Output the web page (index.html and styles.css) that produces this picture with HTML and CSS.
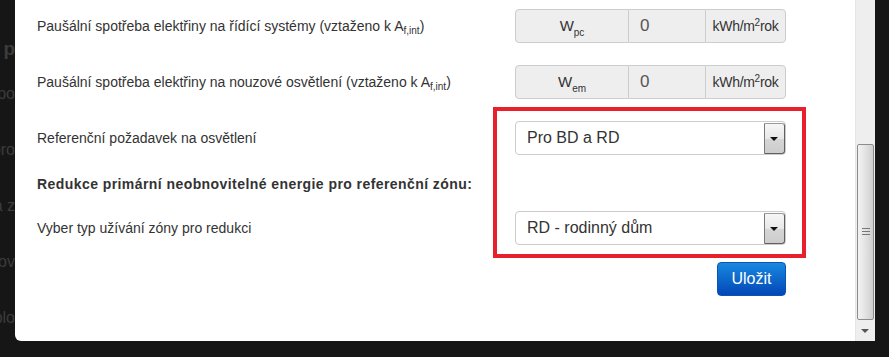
FILE: index.html
```html
<!DOCTYPE html>
<html lang="cs">
<head>
    <meta charset="UTF-8">
    <title>Osvětlení</title>
    <link rel="stylesheet" href="styles.css">
</head>
<body>
    <div class="screen">
        <div class="behind">
            <p class="bold">ný p</p>
            <p>é po</p>
            <p>a pro</p>
            <p>ha z</p>
            <p>nnov</p>
            <p>á plo</p>
        </div>

        <div class="modal">
            <div class="modal-body">
                <div class="row">
                    <div class="label">Paušální spotřeba elektřiny na řídící systémy (vztaženo k A<sub>f,int</sub>)</div>
                    <div class="input-group">
                        <div class="addon sym">W<sub>pc</sub></div>
                        <div class="value">0</div>
                        <div class="addon unit">kWh/m<sup>2</sup>rok</div>
                    </div>
                </div>

                <div class="row">
                    <div class="label">Paušální spotřeba elektřiny na nouzové osvětlení (vztaženo k A<sub>f,int</sub>)</div>
                    <div class="input-group">
                        <div class="addon sym">W<sub>em</sub></div>
                        <div class="value">0</div>
                        <div class="addon unit">kWh/m<sup>2</sup>rok</div>
                    </div>
                </div>

                <div class="row row-select">
                    <div class="label">Referenční požadavek na osvětlení</div>
                    <div class="select">
                        <span>Pro BD a RD</span>
                        <span class="drop"></span>
                    </div>
                </div>

                <div class="row heading">
                    <div class="label"><strong>Redukce primární neobnovitelné energie pro referenční zónu:</strong></div>
                </div>

                <div class="row">
                    <div class="label">Vyber typ užívání zóny pro redukci</div>
                    <div class="select">
                        <span>RD - rodinný dům</span>
                        <span class="drop"></span>
                    </div>
                </div>

                <div class="actions">
                    <button class="btn-save">Uložit</button>
                </div>

                <div class="highlight"></div>
            </div>
        </div>

        <div class="scrollbar">
            <div class="thumb"><span class="grip"></span></div>
            <div class="arrow-down"></div>
        </div>
    </div>
</body>
</html>
```

FILE: styles.css
```css
body {
    margin: 0;
    background-color: #161616;
    font-family: "Liberation Sans", Arial, sans-serif;
    overflow: hidden;
}
.screen {
    display: flex;
    width: 889px;
    height: 357px;
}
.behind {
    width: 15px;
    flex: none;
    overflow: hidden;
    color: #3c3c3c;
    font-size: 16px;
    padding-top: 38px;
}
.behind p {
    display: flex;
    justify-content: flex-end;
    white-space: nowrap;
    margin: 0 0 36px 0;
    height: 20px;
}
.behind .bold {
    font-weight: bold;
    font-size: 19px;
    margin-bottom: 27px;
}
.modal {
    width: 840px;
    height: 341px;
    flex: none;
    background-color: #fff;
    border-bottom-left-radius: 6px;
}
.modal-body {
    position: relative;
    padding: 9px 69px 0 22px;
}
.row {
    display: flex;
    align-items: center;
    height: 34px;
    margin-bottom: 22px;
}
.row-select {
    margin-top: 1px;
    margin-bottom: 19px;
}
.heading {
    height: 20px;
    margin-bottom: 17px;
}
.label {
    flex: 1;
    font-size: 14px;
    color: #333;
}
.label sub {
    font-size: 10px;
    vertical-align: -3px;
    line-height: 0;
}
.label strong {
    font-weight: bold;
    letter-spacing: 0.43px;
}
.input-group {
    display: flex;
    width: 271px;
    height: 34px;
    color: #555;
}
.input-group > div {
    height: 34px;
    line-height: 32px;
    background-color: #eee;
    border: 1px solid #ccc;
    box-sizing: border-box;
    white-space: nowrap;
}
.addon.sym {
    width: 114px;
    text-align: center;
    border-radius: 4px 0 0 4px;
    font-size: 15px;
    color: #333;
}
.addon.sym sub {
    font-size: 10px;
    vertical-align: -5px;
    line-height: 0;
}
.value {
    width: 76px;
    padding-left: 11px;
    border-left: none !important;
    border-right: none !important;
    color: #555;
    font-size: 17px;
}
.addon.unit {
    width: 81px;
    text-align: center;
    border-radius: 0 4px 4px 0;
    font-size: 14px;
    color: #333;
    letter-spacing: -0.3px;
}
.addon.unit sup {
    font-size: 10px;
    vertical-align: 5px;
    line-height: 0;
}
.select {
    display: flex;
    align-items: center;
    justify-content: space-between;
    width: 271px;
    height: 34px;
    box-sizing: border-box;
    border: 1px solid #ccc;
    border-radius: 4px;
    padding-left: 11px;
    font-size: 16px;
    color: #333;
}
.drop {
    position: relative;
    width: 21px;
    height: 31px;
    box-sizing: border-box;
    border: 1px solid #606060;
    border-top-color: #9a9a9a;
    border-left-color: #7a7a7a;
    background: linear-gradient(#f6f6f6 0%, #e8e8e8 50%, #d6d6d6 51%, #cccccc 100%);
    border-radius: 0 3px 3px 0;
}
.drop::after {
    content: "";
    position: absolute;
    left: 5px;
    top: 13px;
    border-left: 4px solid transparent;
    border-right: 4px solid transparent;
    border-top: 4px solid #111;
}
.actions {
    display: flex;
    justify-content: flex-end;
    margin-top: -5px;
}
.btn-save {
    width: 69px;
    height: 34px;
    border: 1px solid #0a55b0;
    border-radius: 4px;
    background: linear-gradient(#1788e0, #0347b6);
    color: #fff;
    font-family: "Liberation Sans", Arial, sans-serif;
    font-size: 16px;
    padding: 0;
    cursor: pointer;
}
.highlight {
    position: absolute;
    left: 478px;
    top: 107px;
    width: 313px;
    height: 151px;
    box-sizing: border-box;
    border: 4px solid #e8202b;
}
.scrollbar {
    position: relative;
    width: 20px;
    height: 341px;
    flex: none;
    background-color: #eeeeee;
    border-left: 1px solid #e6e6e6;
    box-sizing: border-box;
}
.thumb {
    position: absolute;
    left: 1px;
    top: 144px;
    width: 17px;
    height: 176px;
    box-sizing: border-box;
    border: 1px solid #8c8c8c;
    border-radius: 2px;
    background: linear-gradient(to right, #f2f2f2 0%, #e6e6e6 40%, #cfcfcf 100%);
}
.grip {
    position: absolute;
    left: 4px;
    top: 83px;
    width: 8px;
    height: 8px;
    background: repeating-linear-gradient(#777 0 1px, transparent 1px 3px);
}
.arrow-down {
    position: absolute;
    left: 5px;
    top: 329px;
    border-left: 4px solid transparent;
    border-right: 4px solid transparent;
    border-top: 4px solid #555;
}
```
